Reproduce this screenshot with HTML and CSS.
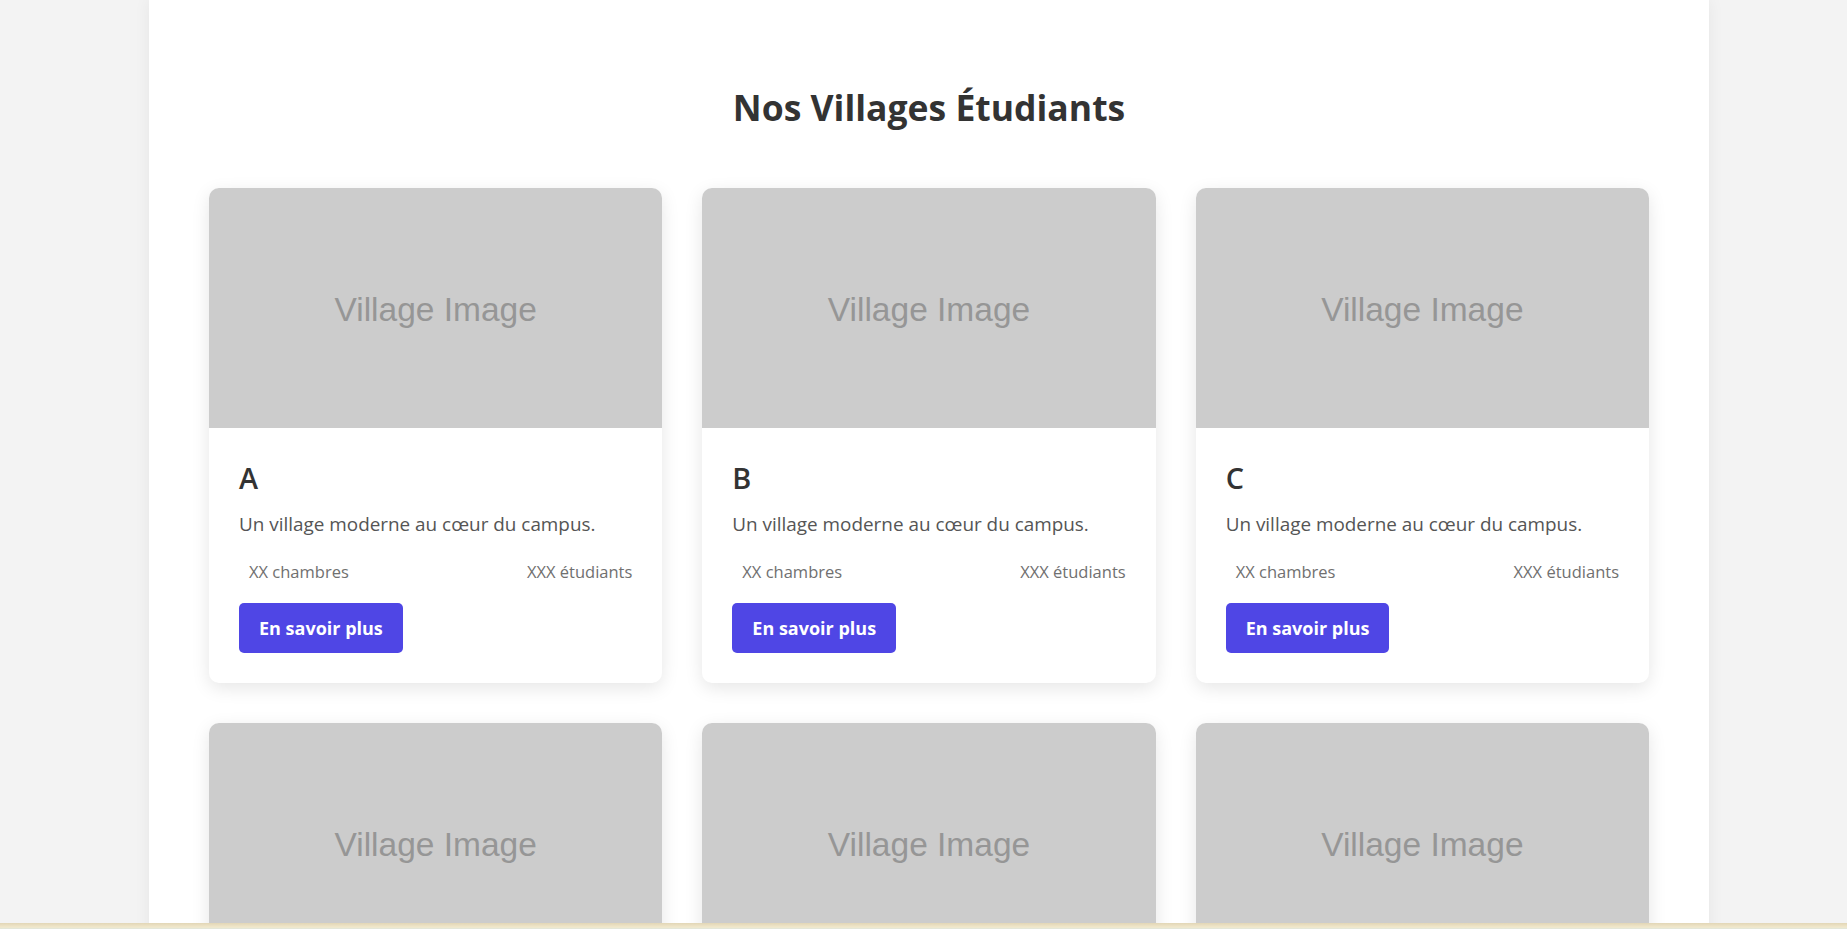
FILE: index.html
```html
<!DOCTYPE html>
<html lang="fr">
<head>
<meta charset="utf-8">
<title>Nos Villages Étudiants</title>
<link rel="stylesheet" href="styles.css">
</head>
<body>
<main class="page">
  <section class="villages">
    <h2 class="section-title">Nos Villages Étudiants</h2>
    <div class="grid">
      <article class="card">
        <div class="card-image">Village Image</div>
        <div class="card-body">
          <h3 class="card-title">A</h3>
          <p class="card-desc">Un village moderne au cœur du campus.</p>
          <div class="card-stats"><span>XX chambres</span><span>XXX étudiants</span></div>
          <a class="btn" href="#">En savoir plus</a>
        </div>
      </article>
      <article class="card">
        <div class="card-image">Village Image</div>
        <div class="card-body">
          <h3 class="card-title">B</h3>
          <p class="card-desc">Un village moderne au cœur du campus.</p>
          <div class="card-stats"><span>XX chambres</span><span>XXX étudiants</span></div>
          <a class="btn" href="#">En savoir plus</a>
        </div>
      </article>
      <article class="card">
        <div class="card-image">Village Image</div>
        <div class="card-body">
          <h3 class="card-title">C</h3>
          <p class="card-desc">Un village moderne au cœur du campus.</p>
          <div class="card-stats"><span>XX chambres</span><span>XXX étudiants</span></div>
          <a class="btn" href="#">En savoir plus</a>
        </div>
      </article>
      <article class="card">
        <div class="card-image">Village Image</div>
        <div class="card-body">
          <h3 class="card-title">D</h3>
          <p class="card-desc">Un village moderne au cœur du campus.</p>
          <div class="card-stats"><span>XX chambres</span><span>XXX étudiants</span></div>
          <a class="btn" href="#">En savoir plus</a>
        </div>
      </article>
      <article class="card">
        <div class="card-image">Village Image</div>
        <div class="card-body">
          <h3 class="card-title">E</h3>
          <p class="card-desc">Un village moderne au cœur du campus.</p>
          <div class="card-stats"><span>XX chambres</span><span>XXX étudiants</span></div>
          <a class="btn" href="#">En savoir plus</a>
        </div>
      </article>
      <article class="card">
        <div class="card-image">Village Image</div>
        <div class="card-body">
          <h3 class="card-title">F</h3>
          <p class="card-desc">Un village moderne au cœur du campus.</p>
          <div class="card-stats"><span>XX chambres</span><span>XXX étudiants</span></div>
          <a class="btn" href="#">En savoir plus</a>
        </div>
      </article>
    </div>
  </section>
</main>
<div class="bottom-strip"></div>
</body>
</html>
```
FILE: styles.css
```css
html {
  overflow: hidden;
}
body {
  margin: 0;
  background: #f3f3f3;
  font-family: "Open Sans", "Noto Sans", sans-serif;
  display: flex;
  justify-content: center;
  padding-left: 11px;
}
.page {
  width: 1560px;
  box-sizing: border-box;
  background: #ffffff;
  padding: 0 60px;
  box-shadow: 0 0 16px rgba(0, 0, 0, 0.06);
  min-height: 1400px;
}
.villages {
  padding-top: 84px;
}
.section-title {
  margin: 0 0 58px;
  text-align: center;
  font-size: 35.5px;
  line-height: 46px;
  font-weight: 700;
  color: #333333;
}
.grid {
  display: grid;
  grid-template-columns: repeat(3, 1fr);
  gap: 40px;
}
.card {
  background: #fff;
  border-radius: 10px;
  overflow: hidden;
  box-shadow: 0 5px 18px rgba(0, 0, 0, 0.1);
}
.card-image {
  height: 240px;
  box-sizing: border-box;
  padding-top: 3px;
  background: #cccccc;
  color: #969696;
  font-family: "Liberation Sans", Arial, sans-serif;
  font-size: 33.5px;
  display: flex;
  align-items: center;
  justify-content: center;
}
.card-body {
  padding: 30px;
}
.card-title {
  margin: 0;
  font-size: 28.8px;
  line-height: 40px;
  font-weight: 600;
  color: #333333;
}
.card-desc {
  margin: 12px 0 0;
  font-size: 18.9px;
  line-height: 28px;
  color: #555555;
}
.card-stats {
  margin-top: 21px;
  display: flex;
  justify-content: space-between;
  font-size: 16.5px;
  line-height: 26px;
  color: #707070;
}
.card-stats span {
  padding-left: 10px;
}
.btn {
  display: inline-block;
  margin-top: 18px;
  padding: 12px 20px;
  background: #4f46e5;
  color: #fff;
  font-size: 18px;
  line-height: 26px;
  font-weight: 700;
  text-decoration: none;
  border-radius: 5px;
}
.bottom-strip {
  position: fixed;
  left: 0;
  right: 0;
  bottom: 0;
  height: 6px;
  background: linear-gradient(#e2d6b6, #f1e8cc 70%, #dfe6dc);
}
```
